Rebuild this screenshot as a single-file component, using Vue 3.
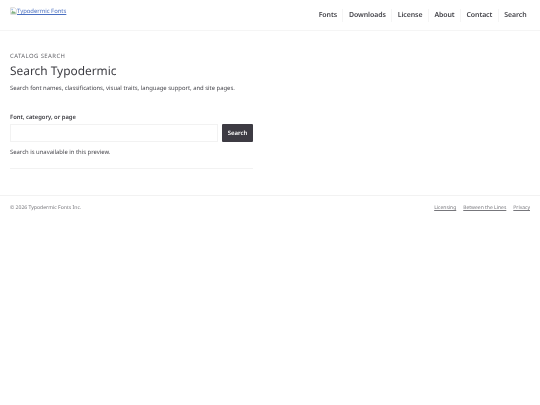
<script setup>
const nav = ['Fonts', 'Downloads', 'License', 'About', 'Contact', 'Search']
const foot = ['Licensing', 'Between the Lines', 'Privacy']
</script>

<template>
  <div class="page">
    <header class="head">
      <a class="logo" href="#">
        <svg class="broken" viewBox="0 0 16 16">
          <path d="M1.5 0.5h9l4 4v11h-13z" fill="#fff" stroke="#a8a8a8" />
          <path d="M3 12l3-5 3 3 2-1 2 3v2H3z" fill="#86b486" />
          <path d="M3 3h4v3H3z" fill="#a9c4e8" />
        </svg><span>Typodermic Fonts</span>
      </a>
      <nav class="nav">
        <a v-for="n in nav" :key="n" href="#">{{ n }}</a>
      </nav>
    </header>
    <main class="main">
      <div class="eyebrow">CATALOG SEARCH</div>
      <h1>Search Typodermic</h1>
      <p class="lead">Search font names, classifications, visual traits, language support, and site pages.</p>
      <form class="form" @submit.prevent>
        <label for="q">Font, category, or page</label>
        <div class="row">
          <input id="q" type="text" />
          <button type="submit">Search</button>
        </div>
      </form>
      <p class="note">Search is unavailable in this preview.</p>
    </main>
    <footer class="foot">
      <span class="copy">© 2026 Typodermic Fonts Inc.</span>
      <div class="links">
        <a v-for="f in foot" :key="f" href="#">{{ f }}</a>
      </div>
    </footer>
  </div>
</template>

<style>
html, body { margin: 0; background: #fff; }
</style>

<style scoped>
.page { font-family: "Noto Sans", sans-serif; color: #44444a; width: 540px; text-rendering: geometricPrecision; filter: blur(0.25px); }
.head { height: 30px; border-bottom: 1px solid #f5f5f5; display: flex; justify-content: space-between; align-items: flex-start; padding: 0 8px 0 10px; }
.logo { font-size: 5.9px; color: #4a6fc0; margin-top: 7px; display: flex; line-height: 8px; }
.broken { width: 7px; height: 8px; flex: none; }
.nav { display: flex; margin-top: 9px; }
.nav a { font-size: 6.95px; font-weight: 600; letter-spacing: -0.08px; color: #44444a; text-decoration: none; padding: 0 5.5px; line-height: 13px; border-left: 1px solid #f5f5f5; }
.nav a:first-child { border-left: 0; }
.main { width: 243px; margin-left: 10px; padding-top: 20px; height: 117px; border-bottom: 1px solid #f2f2f2; }
.eyebrow { font-size: 5.9px; letter-spacing: 0.45px; color: #66666b; line-height: 10px; }
h1 { font-size: 11.9px; font-weight: 400; margin: 1px 0 2px; line-height: 18px; color: #3c3c42; }
.lead { font-size: 5.9px; margin: 0; line-height: 12px; white-space: nowrap; }
.form { margin-top: 18px; }
label { display: block; font-size: 5.85px; font-weight: 600; line-height: 10px; margin-bottom: 2px; color: #3c3c42; }
.row { display: flex; gap: 4px; }
input { flex: 1; min-width: 0; height: 18px; box-sizing: border-box; border: 1px solid #f2f2f2; padding: 0 4px; }
button { width: 31px; height: 18px; padding: 0; border: 0; background: #3d3b43; color: #fff; font: 600 6px "Noto Sans", sans-serif; border-radius: 1px; text-rendering: geometricPrecision; }
.note { font-size: 5.9px; margin: 5px 0 0; line-height: 10px; }
.foot { border-top: 1px solid #f2f2f2; margin-top: 26px; padding: 8px 10px; display: flex; justify-content: space-between; font-size: 5px; color: #77777c; line-height: 8px; }
.copy { font-size: 5.1px; }
.links { display: flex; gap: 7px; }
.links a { color: #77777c; }
</style>
